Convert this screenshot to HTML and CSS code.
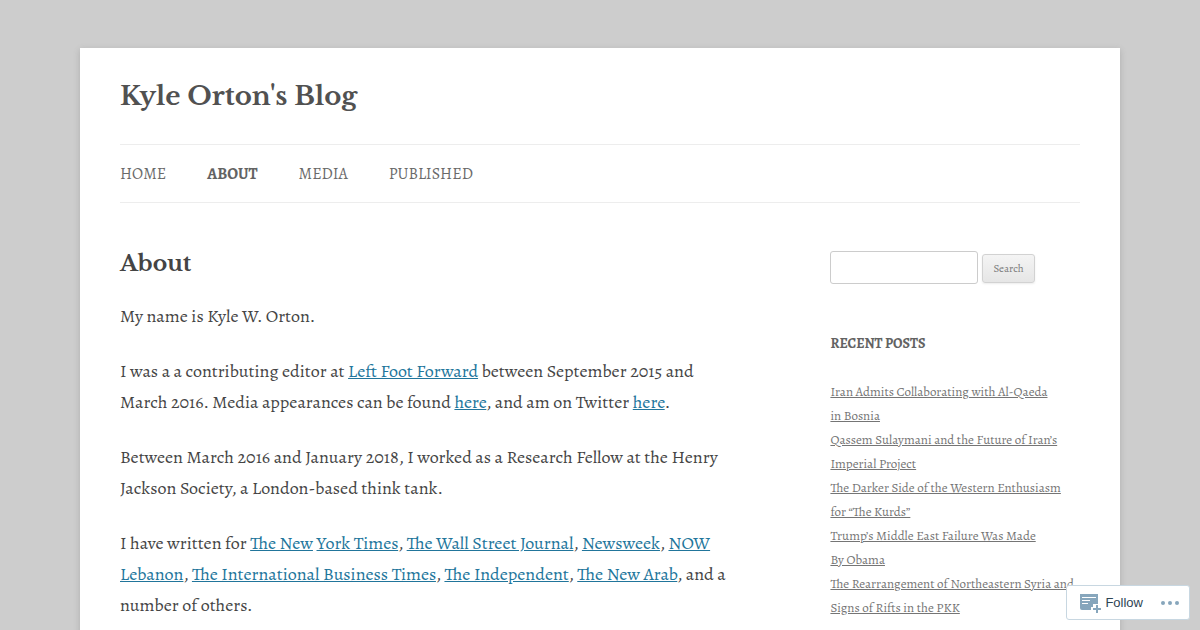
FILE: index.html
```html
<!DOCTYPE html>
<html lang="en">
<head>
  <meta charset="UTF-8">
  <meta name="viewport" content="width=device-width, initial-scale=1.0">
  <title>About | Kyle Orton's Blog</title>
  <link rel="stylesheet" href="styles.css">
</head>
<body>

  <div class="site">
    <header class="site-header">
      <h1 class="site-title"><a href="#">Kyle Orton's Blog</a></h1>
      <nav class="main-nav">
        <a href="#">Home</a>
        <a href="#" class="current">About</a>
        <a href="#">Media</a>
        <a href="#">Published</a>
      </nav>
    </header>

    <div class="columns">
      <main class="content">
        <h2 class="entry-title">About</h2>
        <p>My name is Kyle W. Orton.</p>
        <p>I was a a contributing editor at <a href="#">Left Foot Forward</a> between September 2015 and March 2016. Media appearances can be found <a href="#">here</a>, and am on Twitter <a href="#">here</a>.</p>
        <p>Between March 2016 and January 2018, I worked as a Research Fellow at the Henry Jackson Society, a London-based think tank.</p>
        <p>I have written for <a href="#">The New</a> <a href="#">York Times</a>, <a href="#">The Wall Street Journal</a>, <a href="#">Newsweek</a>, <a href="#">NOW Lebanon</a>, <a href="#">The International Business Times</a>, <a href="#">The Independent</a>, <a href="#">The New Arab</a>, and a number of others.</p>
      </main>

      <aside class="sidebar">
        <form class="search-form">
          <input type="text" class="search-field" aria-label="Search for">
          <button type="submit" class="search-button">Search</button>
        </form>

        <h3 class="widget-title">Recent Posts</h3>
        <ul class="recent-posts">
          <li><a href="#">Iran Admits Collaborating with Al-Qaeda in&nbsp;Bosnia</a></li>
          <li><a href="#">Qassem Sulaymani and the Future of Iran’s Imperial&nbsp;Project</a></li>
          <li><a href="#">The Darker Side of the Western Enthusiasm for&nbsp;“The&nbsp;Kurds”</a></li>
          <li><a href="#">Trump’s Middle East Failure Was Made By&nbsp;Obama</a></li>
          <li><a href="#">The Rearrangement of Northeastern Syria and Signs of Rifts in the&nbsp;PKK</a></li>
        </ul>
      </aside>
    </div>
  </div>

  <div class="follow-bar">
    <button type="button" class="follow-button">
      <svg width="22" height="20" viewBox="0 0 22 20" aria-hidden="true">
        <path fill="#87a6bc" d="M0 1h18v10h-5v3h-2v3H2a2 2 0 0 1-2-2z"/>
        <path fill="#fff" d="M2 4h14v1H2zM2 7h8v1H2zM2 10h6v1H2z"/>
        <path fill="#87a6bc" d="M16 12h2v3h3v2h-3v3h-2v-3h-3v-2h3z"/>
      </svg>
      Follow
    </button>
    <button type="button" class="more-button" aria-label="More">
      <svg width="18" height="4" viewBox="0 0 18 4" aria-hidden="true">
        <g fill="#87a6bc">
          <circle cx="2" cy="2" r="2"/>
          <circle cx="9" cy="2" r="2"/>
          <circle cx="16" cy="2" r="2"/>
        </g>
      </svg>
    </button>
  </div>

</body>
</html>
```
FILE: styles.css
```css
* {
  box-sizing: border-box;
}

body {
  margin: 0;
  padding: 48px 80px;
  background-color: #cdcdcd;
  color: #444;
  font-family: "Alegreya", "Liberation Serif", serif;
  font-size: 18px;
  line-height: 31px;
}

.site {
  max-width: 1040px;
  margin: 0 auto;
  padding: 24px 40px;
  background-color: #fff;
  box-shadow: 0 2px 6px rgba(100, 100, 100, 0.3);
}

.site-title,
.entry-title {
  font-family: "Libre Baskerville", "Liberation Serif", serif;
}

.site-title {
  margin: 0 0 24px;
  font-size: 26px;
  line-height: 48px;
}

.site-title a {
  color: #515151;
  text-decoration: none;
}

.main-nav {
  display: flex;
  gap: 41px;
  padding: 15px 0 13px;
  border-top: 1px solid #ededed;
  border-bottom: 1px solid #ededed;
  font-size: 16px;
  line-height: 29px;
  text-transform: uppercase;
}

.main-nav a {
  color: #6a6a6a;
  text-decoration: none;
}

.main-nav .current {
  color: #636363;
  font-weight: bold;
}

.columns {
  display: flex;
  justify-content: space-between;
  padding-top: 48px;
}

.content {
  width: 65%;
}

.entry-title {
  margin: 0 0 24px;
  font-size: 22px;
  line-height: 26px;
}

.content p {
  margin: 0 0 24px;
}

.content a {
  color: #21759b;
}

.sidebar {
  width: 26%;
}

.search-form {
  display: flex;
  align-items: center;
  gap: 4px;
  margin-bottom: 48px;
}

.search-field {
  width: 148px;
  height: 33px;
  padding: 6px;
  border: 1px solid #ccc;
  border-radius: 3px;
  font-family: inherit;
}

.search-button {
  height: 29px;
  margin-top: 2px;
  padding: 0 10px;
  border: 1px solid #d2d2d2;
  border-radius: 3px;
  background: linear-gradient(#f4f4f4, #e6e6e6);
  box-shadow: 0 1px 2px rgba(64, 64, 64, 0.1);
  color: #7c7c7c;
  font-family: inherit;
  font-size: 11px;
}

.widget-title {
  margin: 0 0 24px;
  color: #636363;
  font-size: 14px;
  line-height: 24px;
  text-transform: uppercase;
}

.recent-posts {
  margin: 0;
  padding: 0;
  list-style: none;
  font-size: 13px;
  line-height: 24px;
}

.recent-posts a {
  color: #757575;
}

.follow-bar {
  position: fixed;
  right: 10px;
  bottom: 10px;
  display: flex;
  align-items: center;
  gap: 18px;
  height: 35px;
  padding: 0 10px 0 13px;
  border: 1px solid #c8d7e1;
  border-radius: 3px;
  background-color: #fff;
}

.follow-button,
.more-button {
  display: flex;
  align-items: center;
  gap: 3px;
  padding: 0;
  border: 0;
  background: none;
  color: #2e4453;
  font-family: "Liberation Sans", sans-serif;
  font-size: 13px;
}
```
